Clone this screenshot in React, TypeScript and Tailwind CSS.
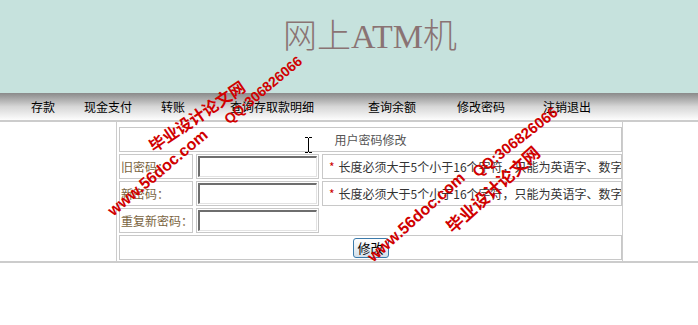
export default function App() {
  const cell = "border border-[#c8c8c8]";
  return (
    <div className="relative w-[698px] h-[325px] overflow-hidden bg-white font-['Noto_Sans_CJK_SC',sans-serif] text-[12px]">
      <header className="h-[93px] bg-[#c6e2dd] flex justify-center pt-[17px]">
        <h1 className="ml-[42px] text-[34px] leading-[40px] text-[#8a7373] font-light font-['Liberation_Serif','Noto_Sans_CJK_SC',serif]">
          网上ATM机
        </h1>
      </header>
      <nav className="h-[27px] bg-linear-to-b from-[#8a8a8a] via-[#d6d6d6] to-[#fdfdfd] flex items-center text-black leading-none">
        <span className="ml-[31px]">存款</span>
        <span className="ml-[29px]">现金支付</span>
        <span className="ml-[29px]">转账</span>
        <span className="ml-[45px]">查询存取款明细</span>
        <span className="ml-[54px]">查询余额</span>
        <span className="ml-[41px]">修改密码</span>
        <span className="ml-[38px]">注销退出</span>
      </nav>
      <section className="h-[143px] border-t-2 border-b-2 border-[#cccccc]">
        <div className="ml-[116px] w-[507px] h-full border-x border-[#cccccc] pt-[5px] pl-[2px]">
          <div className="grid grid-cols-[74px_123px_300px] grid-rows-[repeat(5,25px)] gap-x-[3px] gap-y-[2px] leading-none">
            <div className={`${cell} col-span-3 flex items-center justify-center text-[#555555]`}>用户密码修改</div>

            <div className={`${cell} flex items-center pl-[1px] text-[#7a6441]`}>旧密码：</div>
            <div className={`${cell} p-[1px]`}>
              <input className="block w-full h-full border-t-2 border-l-2 border-r border-b border-t-[#6e6e6e] border-l-[#6e6e6e] border-r-[#e2e2e2] border-b-[#e2e2e2] bg-white outline-none" />
            </div>
            <div className={`${cell} flex items-center pl-[6px] text-[#333333] whitespace-nowrap overflow-hidden`}>
              <span className="text-[#cc0000] mr-[4px]">*</span>长度必须大于5个小于16个字符，只能为英语字、数字
            </div>

            <div className={`${cell} flex items-center pl-[1px] text-[#7a6441]`}>新密码：</div>
            <div className={`${cell} p-[1px]`}>
              <input className="block w-full h-full border-t-2 border-l-2 border-r border-b border-t-[#6e6e6e] border-l-[#6e6e6e] border-r-[#e2e2e2] border-b-[#e2e2e2] bg-white outline-none" />
            </div>
            <div className={`${cell} flex items-center pl-[6px] text-[#333333] whitespace-nowrap overflow-hidden`}>
              <span className="text-[#cc0000] mr-[4px]">*</span>长度必须大于5个小于16个字符，只能为英语字、数字
            </div>

            <div className={`${cell} flex items-center pl-[1px] text-[#7a6441] whitespace-nowrap`}>重复新密码：</div>
            <div className={`${cell} p-[1px]`}>
              <input className="block w-full h-full border-t-2 border-l-2 border-r border-b border-t-[#6e6e6e] border-l-[#6e6e6e] border-r-[#e2e2e2] border-b-[#e2e2e2] bg-white outline-none" />
            </div>
            <div />

            <div className={`${cell} col-span-3 flex items-center justify-center`}>
              <button className="h-[20px] w-[36px] rounded-[3px] border border-[#3c7bab] bg-linear-to-b from-white to-[#d3e0ea] text-[13px] leading-none text-black">
                修改
              </button>
            </div>
          </div>
        </div>
      </section>

      {/* text cursor */}
      <svg className="absolute left-[304px] top-[137px]" width="9" height="16" viewBox="0 0 9 16">
        <path d="M1 0.5h3M5 0.5h3M4.5 1v14M1 15.5h3M5 15.5h3" stroke="#000" strokeWidth="1" fill="none" />
      </svg>

      {/* watermarks */}
      <div className="absolute left-[150px] top-[139px] origin-left rotate-[-34deg] whitespace-nowrap text-[16px] leading-[16px] font-bold text-[#d00000]">毕业设计论文网</div>
      <div className="absolute left-[110px] top-[205px] origin-left rotate-[-40deg] whitespace-nowrap text-[16px] leading-[16px] font-bold text-[#d00000] font-['Liberation_Sans',sans-serif]">www.56doc.com</div>
      <div className="absolute left-[226px] top-[114px] origin-left rotate-[-40deg] whitespace-nowrap text-[14px] leading-[14px] font-bold text-[#d00000] font-['Liberation_Sans',sans-serif]">QQ:306826066</div>
      <div className="absolute left-[474px] top-[166px] origin-left rotate-[-38deg] whitespace-nowrap text-[15px] leading-[15px] font-bold text-[#d00000] font-['Liberation_Sans',sans-serif]">QQ:306826066</div>
      <div className="absolute left-[370px] top-[251px] origin-left rotate-[-42deg] whitespace-nowrap text-[16px] leading-[16px] font-bold text-[#d00000] font-['Liberation_Sans',sans-serif]">www.56doc.com</div>
      <div className="absolute left-[448px] top-[220px] origin-left rotate-[-42deg] whitespace-nowrap text-[17px] leading-[17px] font-bold text-[#d00000]">毕业设计论文网</div>
    </div>
  );
}
